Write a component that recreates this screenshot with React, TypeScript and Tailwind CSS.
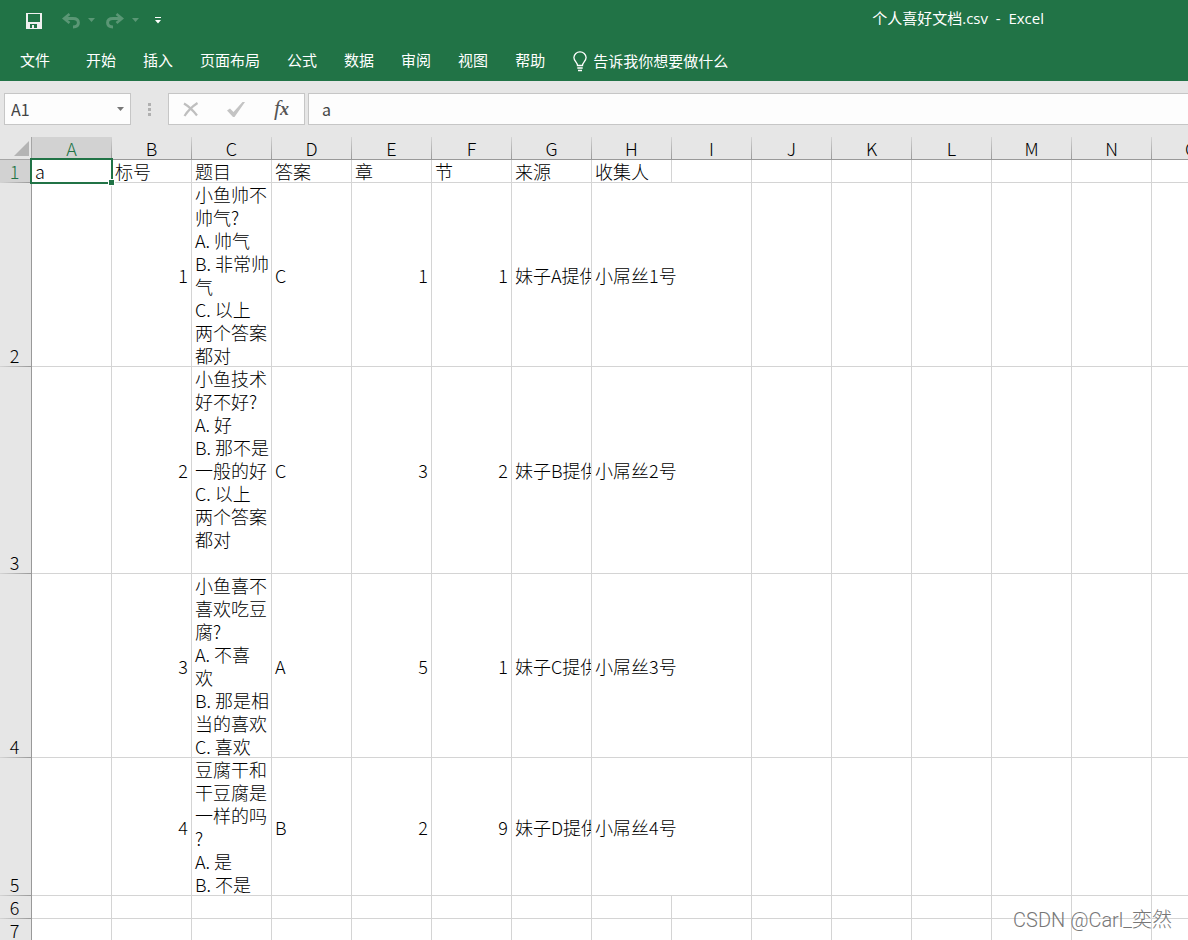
import React from "react";

const columns = ["A", "B", "C", "D", "E", "F", "G", "H", "I", "J", "K", "L", "M", "N", "O"];

const tabs = ["开始", "插入", "页面布局", "公式", "数据", "审阅", "视图", "帮助"];

type Row = { n: number; cells: string[] };

const rows: Row[] = [
  { n: 1, cells: ["a", "标号", "题目", "答案", "章", "节", "来源", "收集人"] },
  {
    n: 2,
    cells: ["", "1", "小鱼帅不\n帅气?\nA. 帅气\nB. 非常帅\n气\nC. 以上\n两个答案\n都对", "C", "1", "1", "妹子A提供", "小屌丝1号"],
  },
  {
    n: 3,
    cells: ["", "2", "小鱼技术\n好不好?\nA. 好\nB. 那不是\n一般的好\nC. 以上\n两个答案\n都对\n\u00a0", "C", "3", "2", "妹子B提供", "小屌丝2号"],
  },
  {
    n: 4,
    cells: ["", "3", "小鱼喜不\n喜欢吃豆\n腐?\nA. 不喜\n欢\nB. 那是相\n当的喜欢\nC. 喜欢", "A", "5", "1", "妹子C提供", "小屌丝3号"],
  },
  {
    n: 5,
    cells: ["", "4", "豆腐干和\n干豆腐是\n一样的吗\n?\nA. 是\nB. 不是", "B", "2", "9", "妹子D提供", "小屌丝4号"],
  },
  { n: 6, cells: [] },
  { n: 7, cells: [] },
];

function Caret() {
  return (
    <svg width="7" height="4" viewBox="0 0 7 4" aria-hidden="true">
      <path d="M0 0h7L3.5 4z" fill="currentColor" />
    </svg>
  );
}

function SaveIcon() {
  return (
    <svg width="16" height="16" viewBox="0 0 16 16" aria-hidden="true">
      <path fillRule="evenodd" fill="#f0f0f0" d="M0 0h16v16H0zM2 1v8h12V1zM4 11v4h2v-3h2v3h3v-4z" />
    </svg>
  );
}

function UndoIcon({ flip = false }: { flip?: boolean }) {
  return (
    <svg width="18" height="16" viewBox="0 0 18 16" aria-hidden="true" fill="none" stroke="currentColor" strokeWidth="3">
      <g transform={flip ? "translate(18 0) scale(-1 1)" : undefined}>
        <path d="M7.500 1 2 5.500 7.500 10" strokeWidth="2.600" />
        <path d="M2.500 5.500H11c3.600 0 5.400 1.900 5.400 4.300S14.500 14 11 14" />
      </g>
    </svg>
  );
}

function BulbIcon() {
  return (
    <svg width="14" height="21" viewBox="0 0 14 21" aria-hidden="true" fill="none" stroke="#fff" strokeWidth="1.300">
      <path d="M4.500 14.500c0-3-3.600-4.300-3.600-8A6 6 0 0 1 7 .8a6 6 0 0 1 6.100 5.700c0 3.700-3.600 5-3.600 8z" />
      <path d="M4.300 17h5.400M5 19.600h4" strokeWidth="1.500" />
    </svg>
  );
}

function Header() {
  return (
    <header className="bg-[#217346] text-[15px] text-white">
      <div className="flex h-10 items-center pl-[26px]">
        <button aria-label="保存" className="pt-0.5"><SaveIcon /></button>
        <div className="ml-5 flex items-center gap-2 text-[#5a9775]">
          <button aria-label="撤消" className="pt-0.5"><UndoIcon /></button>
          <button aria-label="撤消选项"><Caret /></button>
        </div>
        <div className="ml-[11px] flex items-center gap-2 text-[#5a9775]">
          <button aria-label="恢复" className="pt-0.5"><UndoIcon flip /></button>
          <button aria-label="恢复选项"><Caret /></button>
        </div>
        <button aria-label="自定义快速访问工具栏" className="ml-4">
          <svg width="6" height="7" viewBox="0 0 6 7" aria-hidden="true" fill="#fff">
            <path d="M0 0h6v1H0zM0 3h6L3 6.500z" />
          </svg>
        </button>
        <h1 className="mr-36 mb-1 ml-auto font-['Open_Sans','Noto_Sans_CJK_SC',sans-serif] whitespace-pre">个人喜好文档.csv{"  -  "}Excel</h1>
      </div>
      <nav className="flex h-[41px] items-center pl-5">
        <button className="mr-9">文件</button>
        <div className="flex gap-[27px]">
          {tabs.map((t) => (
            <button key={t}>{t}</button>
          ))}
        </div>
        <button className="ml-7 flex items-center gap-1.5 pt-px">
          <BulbIcon />
          <span>告诉我你想要做什么</span>
        </button>
      </nav>
    </header>
  );
}

function FormulaBar() {
  return (
    <div className="flex py-3 pl-1 text-[#444]">
      <div className="flex h-8 w-[127px] items-center border border-[#c6c6c6] bg-[#fdfdfd] pr-1.5 pl-1.5">
        <input aria-label="名称框" defaultValue="A1" className="w-0 grow bg-transparent text-base outline-none" />
        <button aria-label="名称列表" className="text-[#777]"><Caret /></button>
      </div>
      <div className="flex w-[37px] flex-col items-center justify-center gap-0.5">
        <span className="size-[3px] bg-[#b0b0b0]" />
        <span className="size-[3px] bg-[#b0b0b0]" />
        <span className="size-[3px] bg-[#b0b0b0]" />
      </div>
      <div className="flex h-8 w-[137px] items-center justify-between border border-[#c6c6c6] bg-[#fdfdfd] pr-[15px] pl-3.5">
        <button aria-label="取消">
          <svg width="16" height="15" viewBox="0 0 16 15" aria-hidden="true" fill="none" stroke="#bfbfbf" strokeWidth="2.200">
            <path d="M1 1.500c5 3 9.500 7.500 13 12M14.500 1C10 4 5 8.500 1.500 14" />
          </svg>
        </button>
        <button aria-label="输入">
          <svg width="18" height="15" viewBox="0 0 18 15" aria-hidden="true" fill="#c4c4c4">
            <path d="M0 8.500 3 6.500 6.500 10 15.500 0H18L7.500 15H6z" />
          </svg>
        </button>
        <button aria-label="插入函数" className="font-['Liberation_Serif',serif] text-[22px] leading-5 text-[#555] italic">
          f<span className="text-lg font-bold">x</span>
        </button>
      </div>
      <input
        aria-label="编辑栏"
        defaultValue="a"
        className="ml-[3px] h-8 w-0 grow border border-r-0 border-[#c6c6c6] bg-[#fdfdfd] pl-[13px] text-base outline-none"
      />
    </div>
  );
}

function Cell({ value, row, col }: { value: string; row: number; col: number }) {
  const numeric = /^\d+$/.test(value);
  const spills = col === 7 && row > 1 && value !== "";
  const line = spills ? "shadow-[inset_0_-1px_0_#d4d4d4]" : "shadow-[inset_-1px_-1px_0_#d4d4d4]";
  const active = row === 1 && col === 0;
  return (
    <td className={`relative h-[23px] p-0 align-middle ${line} ${numeric ? "text-right" : "text-left"}`}>
      {value !== "" && (
        <div className={`mr-px whitespace-pre ${numeric ? "pr-[3px]" : "pl-[3px]"} ${col === 6 ? "overflow-hidden" : ""}`}>{value}</div>
      )}
      {active && (
        <div className="pointer-events-none absolute -top-0.5 -right-px -bottom-px -left-0.5 z-10 border-2 border-[#217346]">
          <span className="absolute -right-[4px] -bottom-[4px] size-[7px] border border-white bg-[#217346]" />
        </div>
      )}
    </td>
  );
}

function Sheet() {
  return (
    <div className="grow overflow-hidden">
      <table className="w-[1232px] table-fixed border-separate border-spacing-0 bg-white text-lg leading-[23px] font-light text-black">
        <colgroup>
          <col className="w-8" />
          {columns.map((c) => (
            <col key={c} className="w-20" />
          ))}
        </colgroup>
        <thead>
          <tr>
            <th aria-label="全选" className="h-[23px] bg-[#e6e6e6] p-0 shadow-[inset_-1px_-1px_0_#a6a6a6]">
              <svg width="15" height="15" viewBox="0 0 15 15" aria-hidden="true" className="mr-[3px] ml-auto">
                <path d="M15 0v15H0z" fill="#b4b4b4" />
              </svg>
            </th>
            {columns.map((c, i) => (
              <th
                key={c}
                scope="col"
                className={`h-[23px] p-0 font-light ${i === 0 ? "bg-[#d2d2d2] text-[#217346]" : "bg-[#e6e6e6]"}`}
              >
                <div className="flex h-[23px] border-b border-[#999]">
                  <span className="grow">{c}</span>
                  <span className="w-px bg-linear-to-b from-[#d4d4d4] to-[#999]" />
                </div>
              </th>
            ))}
          </tr>
        </thead>
        <tbody>
          {rows.map((r) => (
            <tr key={r.n}>
              <th
                scope="row"
                className={`border-r border-[#999] p-0 align-bottom font-light ${r.n === 1 ? "bg-[#d2d2d2] text-[#217346]" : "bg-[#e6e6e6]"}`}
              >
                <div className="h-[22px] pr-0.5">{r.n}</div>
                <div className="h-px bg-linear-to-r from-[#d4d4d4] to-[#999]" />
              </th>
              {columns.map((c, i) => (
                <Cell key={c} value={r.cells[i] ?? ""} row={r.n} col={i} />
              ))}
            </tr>
          ))}
        </tbody>
      </table>
    </div>
  );
}

export default function App() {
  return (
    <div className="relative flex h-screen flex-col overflow-hidden bg-[#e6e6e6] font-['Noto_Sans_CJK_SC',sans-serif]">
      <Header />
      <FormulaBar />
      <Sheet />
      <p className="absolute right-4 bottom-1.5 font-['Roboto','Noto_Sans_CJK_SC',sans-serif] text-xl font-light text-[#777]">
        CSDN @Carl_奕然
      </p>
    </div>
  );
}
